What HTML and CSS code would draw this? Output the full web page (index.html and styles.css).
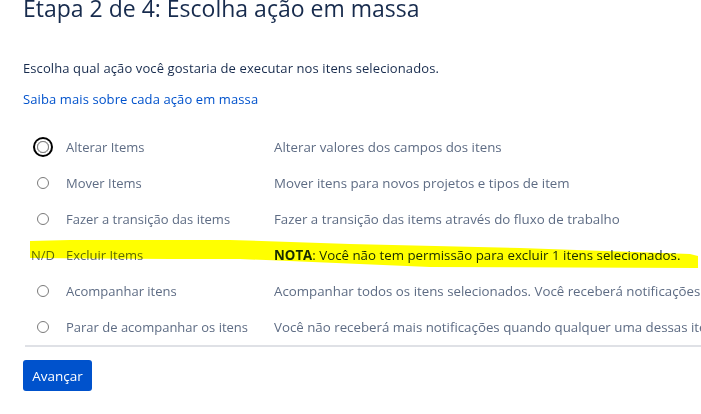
FILE: index.html
```html
<!DOCTYPE html>
<html lang="pt-BR">
<head>
<meta charset="utf-8">
<title>Etapa 2 de 4</title>
<link rel="stylesheet" href="styles.css">
</head>
<body>
<div class="page">
  <h1 class="title">Etapa 2 de 4: Escolha ação em massa</h1>
  <p class="intro">Escolha qual ação você gostaria de executar nos itens selecionados.</p>
  <p class="more"><a class="link" href="#">Saiba mais sobre cada ação em massa</a></p>
  <div class="ops">
    <div class="row">
      <div class="sel"><span class="radio focus"></span></div>
      <div class="name">Alterar Items</div>
      <div class="desc">Alterar valores dos campos dos itens</div>
    </div>
    <div class="row">
      <div class="sel"><span class="radio"></span></div>
      <div class="name">Mover Items</div>
      <div class="desc">Mover itens para novos projetos e tipos de item</div>
    </div>
    <div class="row">
      <div class="sel"><span class="radio"></span></div>
      <div class="name">Fazer a transição das items</div>
      <div class="desc">Fazer a transição das items através do fluxo de trabalho</div>
    </div>
    <div class="row na">
      <div class="sel nd">N/D</div>
      <div class="name">Excluir Items</div>
      <div class="desc"><b>NOTA</b>: Você não tem permissão para excluir 1 itens selecionados.</div>
    </div>
    <div class="row">
      <div class="sel"><span class="radio"></span></div>
      <div class="name">Acompanhar itens</div>
      <div class="desc">Acompanhar todos os itens selecionados. Você receberá notificações quando qualquer um desses itens for atualizado.</div>
    </div>
    <div class="row">
      <div class="sel"><span class="radio"></span></div>
      <div class="name">Parar de acompanhar os itens</div>
      <div class="desc">Você não receberá mais notificações quando qualquer uma dessas itens for atualizada.</div>
    </div>
  </div>
  <div class="actions"><button class="btn" type="button">Avançar</button></div>
</div>
<svg class="marker" width="701" height="40" viewBox="0 0 701 40" aria-hidden="true">
  <path d="M30 2 L70 1 L230 1 L350 5 L520 9 L690 15 L698 17 L698 29 L430 28 L240 20 L170 20 L30 19 Z" fill="#ffff00"/>
</svg>
</body>
</html>
```
FILE: styles.css
```css
html, body {
  margin: 0;
  padding: 0;
  background: #ffffff;
  overflow: hidden;
}
body {
  width: 701px;
  height: 414px;
  position: relative;
  font-family: "Open Sans", "Noto Sans", sans-serif;
  font-size: 13px;
  color: #172b4d;
}
.page {
  padding-left: 23px;
}
.title {
  margin: -8px 0 0 0;
  font-size: 23px;
  line-height: 32px;
  font-weight: 400;
  color: #172b4d;
  white-space: nowrap;
}
.intro {
  margin: 34px 0 0 0;
  line-height: 20px;
  letter-spacing: 0.1px;
}
.more {
  margin: 11px 0 0 0;
  line-height: 20px;
}
.link {
  color: #0052cc;
  text-decoration: none;
  letter-spacing: 0.1px;
}
.ops {
  margin-top: 20px;
  width: 900px;
  margin-left: 2px;
  border-bottom: 2px solid #dfe1e6;
}
.row {
  display: flex;
  align-items: center;
  height: 36px;
  color: #5e6c84;
  white-space: nowrap;
}
.sel {
  flex: 0 0 41px;
  display: flex;
  align-items: center;
  padding-left: 12px;
  box-sizing: border-box;
}
.nd {
  padding-left: 6px;
  color: #5e6c84;
}
.name {
  flex: 0 0 208px;
}
.desc {
  flex: 1 0 auto;
  font-size: 13.3px;
}
.desc b {
  color: #172b4d;
  font-weight: 700;
}
.na .desc {
  color: #172b4d;
}
.radio {
  width: 12px;
  height: 12px;
  border: 1px solid #7a7a7a;
  border-radius: 50%;
  box-sizing: border-box;
}
.radio.focus {
  box-shadow: 0 0 0 2px #ffffff, 0 0 0 4px #000000;
}
.actions {
  margin-top: 13px;
}
.btn {
  width: 69px;
  height: 31px;
  border: 0;
  border-radius: 3px;
  background: #0052cc;
  color: #ffffff;
  font-family: "Open Sans", "Noto Sans", sans-serif;
  font-size: 13.5px;
  padding: 0;
}
.marker {
  position: absolute;
  left: 0;
  top: 239px;
  mix-blend-mode: multiply;
  pointer-events: none;
}
```
